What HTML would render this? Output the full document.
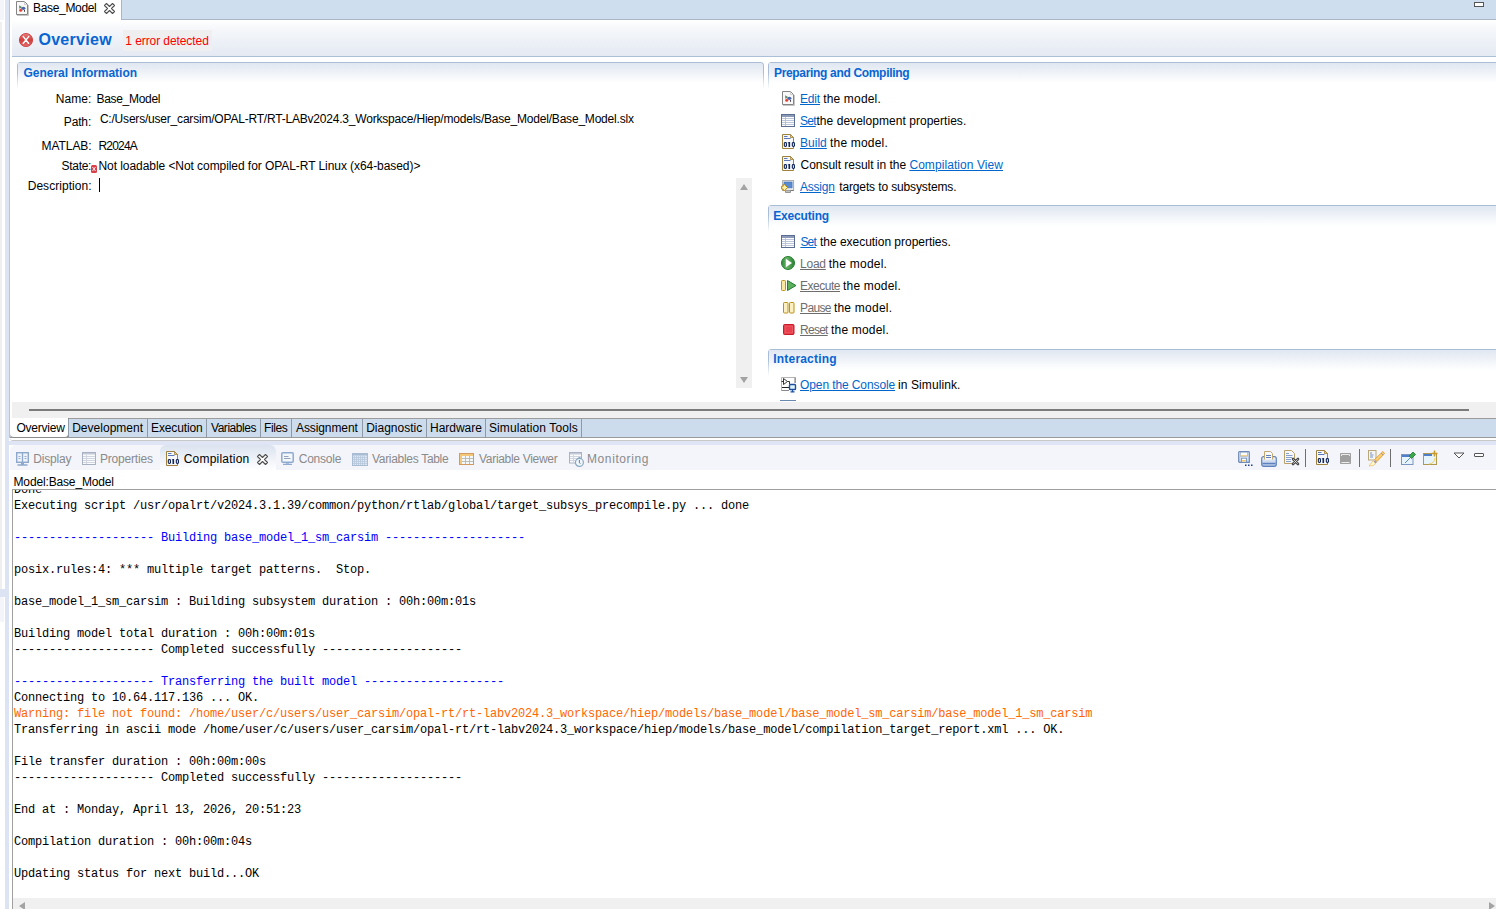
<!DOCTYPE html>
<html><head><meta charset="utf-8"><style>
html,body{margin:0;padding:0;}
body{width:1496px;height:909px;overflow:hidden;position:relative;background:#fff;font-family:"Liberation Sans", sans-serif;}
.a{position:absolute;}
.t{position:absolute;white-space:pre;font-family:"Liberation Sans", sans-serif;}
.m{position:absolute;left:14px;white-space:pre;font-family:"Liberation Mono", monospace;font-size:12px;letter-spacing:-0.2px;line-height:16px;height:16px;}
svg{position:absolute;overflow:visible;}
</style></head><body>
<!-- far left trim -->
<div class="a" style="left:0;top:0;width:4px;height:20px;background:#f3f5fa"></div>
<div class="a" style="left:0;top:22px;width:2px;height:567px;background:#efefef"></div>
<div class="a" style="left:0;top:589px;width:5px;height:8px;background:#dce3f3"></div>
<div class="a" style="left:0;top:597px;width:4px;height:25px;background:#f3f5fb;border-radius:0 3px 0 0"></div>
<div class="a" style="left:5px;top:0;width:4px;height:909px;background:#dce3f3"></div>
<!-- editor frame left border -->
<div class="a" style="left:9px;top:0;width:1px;height:438px;background:#c4c4c4"></div>
<!-- top tab bar -->
<div class="a" style="left:10px;top:0;width:1486px;height:19px;background:#cfdeee;border-bottom:1px solid #aab6c8"></div>
<div class="a" style="left:10px;top:0;width:111px;height:20px;background:#fff;border-right:1px solid #aab6c8"></div>
<div class="a" style="left:1474px;top:2px;width:8px;height:3px;border:1px solid #555;background:#fff"></div>
<!-- form header -->
<div class="a" style="left:12px;top:20px;width:1484px;height:36px;background:linear-gradient(#ffffff 0%,#f5f7fa 25%,#e4eaf3 100%)"></div>
<div class="a" style="left:12px;top:56px;width:1484px;height:1px;background:#abc0d7"></div>
<div class="a" style="left:123px;top:30px;width:89px;height:21px;background:#efefef"></div>
<!-- sections -->
<div class="a" style="left:17px;top:62px;width:745px;height:26px;border:1px solid #a9bed6;border-bottom:none;border-radius:3px 3px 0 0;background:linear-gradient(#dfe6f0,#ffffff 80%);-webkit-mask-image:linear-gradient(#000 40%,transparent)"></div>
<div class="a" style="left:18px;top:63px;width:744px;height:20px;background:linear-gradient(#e0e7f1,#ffffff)"></div>
<div class="a" style="left:768px;top:62px;width:740px;height:26px;border:1px solid #a9bed6;border-bottom:none;border-radius:3px 3px 0 0;-webkit-mask-image:linear-gradient(#000 40%,transparent)"></div>
<div class="a" style="left:769px;top:63px;width:727px;height:20px;background:linear-gradient(#e0e7f1,#ffffff)"></div>
<div class="a" style="left:768px;top:205px;width:740px;height:26px;border:1px solid #a9bed6;border-bottom:none;border-radius:3px 3px 0 0;-webkit-mask-image:linear-gradient(#000 40%,transparent)"></div>
<div class="a" style="left:769px;top:206px;width:727px;height:20px;background:linear-gradient(#e0e7f1,#ffffff)"></div>
<div class="a" style="left:768px;top:349px;width:740px;height:26px;border:1px solid #a9bed6;border-bottom:none;border-radius:3px 3px 0 0;-webkit-mask-image:linear-gradient(#000 40%,transparent)"></div>
<div class="a" style="left:769px;top:350px;width:727px;height:20px;background:linear-gradient(#e0e7f1,#ffffff)"></div>
<!-- description caret -->
<div class="a" style="left:99px;top:178px;width:1px;height:14px;background:#000"></div>
<!-- description scrollbar -->
<div class="a" style="left:736px;top:178px;width:16px;height:210px;background:#f0f0f0"></div>
<svg style="left:740px;top:184px" width="8" height="6"><path d="M0 6 L4 0 L8 6 Z" fill="#a3a3a3"/></svg>
<svg style="left:740px;top:377px" width="8" height="6"><path d="M0 0 L8 0 L4 6 Z" fill="#a3a3a3"/></svg>
<!-- gray strip -->
<div class="a" style="left:12px;top:402px;width:1484px;height:16px;background:#f0f0f0;border-bottom:1px solid #9c9c9c"></div>
<div class="a" style="left:29px;top:409px;width:1440px;height:2px;background:#7b7b7b"></div>
<!-- editor bottom tabs -->
<div class="a" style="left:10px;top:419px;width:1486px;height:18px;background:#cddcec;border-bottom:1px solid #9a9a9a"></div>
<div class="a" style="left:10px;top:418px;width:58px;height:19px;background:#fff;border-bottom:1px solid #8a8a8a;border-right:1px solid #8a8a8a;border-radius:0 0 4px 4px"></div>
<div class="a" style="left:10px;top:438px;width:1486px;height:2px;background:#fff;border-bottom:1px solid #c8c8c8;border-radius:0 0 0 5px"></div>
<!-- gap -->
<div class="a" style="left:9px;top:441px;width:1487px;height:4px;background:#dfe5f4"></div>
<!-- view panel -->
<div class="a" style="left:10px;top:445px;width:1486px;height:25px;background:#f3f5fb;border-radius:6px 0 0 0"></div>
<div class="a" style="left:160px;top:445px;width:116px;height:25px;background:linear-gradient(#dbe3ef,#ffffff);border-radius:6px 6px 0 0"></div>
<div class="a" style="left:10px;top:470px;width:1486px;height:439px;background:#fff"></div>
<!-- console box -->
<div class="a" style="left:12px;top:489px;width:1490px;height:430px;border-left:1px solid #a0a0a0;border-top:1px solid #a0a0a0;background:#fff"></div>
<!-- h scrollbar -->
<div class="a" style="left:13px;top:898px;width:1483px;height:11px;background:#f0f0f0"></div>
<svg style="left:19px;top:902px" width="6" height="8"><path d="M6 0 L0 4 L6 8 Z" fill="#a3a3a3"/></svg>
<svg style="left:1489px;top:902px" width="6" height="8"><path d="M0 0 L6 4 L0 8 Z" fill="#a3a3a3"/></svg>

<div class="a" style="left:13px;top:490px;width:1483px;height:408px;overflow:hidden;">
<div class="a" style="left:-13px;top:-490px;width:1496px;height:909px;">
<div class="m" style="top:482px;color:#000">Done</div>
<div class="m" style="top:498px;color:#000">Executing script /usr/opalrt/v2024.3.1.39/common/python/rtlab/global/target_subsys_precompile.py ... done</div>
<div class="m" style="top:530px;color:#0000ff">-------------------- Building base_model_1_sm_carsim --------------------</div>
<div class="m" style="top:562px;color:#000">posix.rules:4: *** multiple target patterns.  Stop.</div>
<div class="m" style="top:594px;color:#000">base_model_1_sm_carsim : Building subsystem duration : 00h:00m:01s</div>
<div class="m" style="top:626px;color:#000">Building model total duration : 00h:00m:01s</div>
<div class="m" style="top:642px;color:#000">-------------------- Completed successfully --------------------</div>
<div class="m" style="top:674px;color:#0000ff">-------------------- Transferring the built model --------------------</div>
<div class="m" style="top:690px;color:#000">Connecting to 10.64.117.136 ... OK.</div>
<div class="m" style="top:706px;color:#ff6600">Warning: file not found: /home/user/c/users/user_carsim/opal-rt/rt-labv2024.3_workspace/hiep/models/base_model/base_model_sm_carsim/base_model_1_sm_carsim</div>
<div class="m" style="top:722px;color:#000">Transferring in ascii mode /home/user/c/users/user_carsim/opal-rt/rt-labv2024.3_workspace/hiep/models/base_model/compilation_target_report.xml ... OK.</div>
<div class="m" style="top:754px;color:#000">File transfer duration : 00h:00m:00s</div>
<div class="m" style="top:770px;color:#000">-------------------- Completed successfully --------------------</div>
<div class="m" style="top:802px;color:#000">End at : Monday, April 13, 2026, 20:51:23</div>
<div class="m" style="top:834px;color:#000">Compilation duration : 00h:00m:04s</div>
<div class="m" style="top:866px;color:#000">Updating status for next build...OK</div>
</div></div>
<div class="t" style="left:33.10px;top:0.64px;font-size:12px;line-height:14px;color:#000;letter-spacing:-0.344px;">Base_Model</div>
<div class="t" style="left:38.40px;top:30.96px;font-size:16px;line-height:18px;color:#0865d3;font-weight:bold;letter-spacing:0.314px;">Overview</div>
<div class="t" style="left:125.30px;top:33.54px;font-size:12px;line-height:14px;color:#ff0000;letter-spacing:-0.080px;">1 error detected</div>
<div class="t" style="left:23.50px;top:65.84px;font-size:12px;line-height:14px;color:#0865d3;font-weight:bold;letter-spacing:-0.028px;">General Information</div>
<div class="t" style="left:774.00px;top:65.64px;font-size:12px;line-height:14px;color:#0865d3;font-weight:bold;letter-spacing:-0.327px;">Preparing and Compiling</div>
<div class="t" style="left:773.30px;top:209.04px;font-size:12px;line-height:14px;color:#0865d3;font-weight:bold;letter-spacing:-0.188px;">Executing</div>
<div class="t" style="left:773.30px;top:352.04px;font-size:12px;line-height:14px;color:#0865d3;font-weight:bold;letter-spacing:0.190px;">Interacting</div>
<div class="t" style="left:55.70px;top:91.64px;font-size:12px;line-height:14px;color:#000;letter-spacing:0.075px;">Name:</div>
<div class="t" style="left:96.50px;top:91.64px;font-size:12px;line-height:14px;color:#000;letter-spacing:-0.311px;">Base_Model</div>
<div class="t" style="left:63.80px;top:115.04px;font-size:12px;line-height:14px;color:#000;letter-spacing:-0.150px;">Path:</div>
<div class="t" style="left:99.90px;top:112.24px;font-size:12px;line-height:14px;color:#000;letter-spacing:-0.202px;">C:/Users/user_carsim/OPAL-RT/RT-LABv2024.3_Workspace/Hiep/models/Base_Model/Base_Model.slx</div>
<div class="t" style="left:41.50px;top:138.64px;font-size:12px;line-height:14px;color:#000;letter-spacing:-0.050px;">MATLAB:</div>
<div class="t" style="left:98.50px;top:138.64px;font-size:12px;line-height:14px;color:#000;letter-spacing:-0.820px;">R2024A</div>
<div class="t" style="left:61.60px;top:159.24px;font-size:12px;line-height:14px;color:#000;letter-spacing:-0.320px;">State:</div>
<div class="t" style="left:98.50px;top:158.64px;font-size:12px;line-height:14px;color:#000;letter-spacing:-0.064px;">Not loadable &lt;Not compiled for OPAL-RT Linux (x64-based)&gt;</div>
<div class="t" style="left:27.70px;top:179.04px;font-size:12px;line-height:14px;color:#000;letter-spacing:0.045px;">Description:</div>
<div class="t" style="left:800.00px;top:91.64px;font-size:12px;line-height:14px;color:#0066cc;letter-spacing:-0.169px;text-decoration:underline;">Edit</div>
<div class="t" style="left:823.20px;top:91.64px;font-size:12px;line-height:14px;color:#000;letter-spacing:0.167px;">the model.</div>
<div class="t" style="left:800.00px;top:113.64px;font-size:12px;line-height:14px;color:#0066cc;letter-spacing:-0.771px;text-decoration:underline;">Set</div>
<div class="t" style="left:816.50px;top:113.64px;font-size:12px;line-height:14px;color:#000;letter-spacing:0.038px;">the development properties.</div>
<div class="t" style="left:800.00px;top:135.64px;font-size:12px;line-height:14px;color:#0066cc;letter-spacing:0.023px;text-decoration:underline;">Build</div>
<div class="t" style="left:830.00px;top:135.64px;font-size:12px;line-height:14px;color:#000;letter-spacing:0.189px;">the model.</div>
<div class="t" style="left:800.50px;top:157.64px;font-size:12px;line-height:14px;color:#000;letter-spacing:-0.025px;">Consult result in the</div>
<div class="t" style="left:909.40px;top:157.64px;font-size:12px;line-height:14px;color:#0066cc;letter-spacing:0.069px;text-decoration:underline;">Compilation View</div>
<div class="t" style="left:800.00px;top:179.64px;font-size:12px;line-height:14px;color:#0066cc;letter-spacing:-0.236px;text-decoration:underline;">Assign</div>
<div class="t" style="left:839.20px;top:179.64px;font-size:12px;line-height:14px;color:#000;letter-spacing:-0.129px;">targets to subsystems.</div>
<div class="t" style="left:800.40px;top:234.64px;font-size:12px;line-height:14px;color:#0066cc;letter-spacing:-0.837px;text-decoration:underline;">Set</div>
<div class="t" style="left:820.00px;top:234.64px;font-size:12px;line-height:14px;color:#000;letter-spacing:-0.025px;">the execution properties.</div>
<div class="t" style="left:800.00px;top:256.64px;font-size:12px;line-height:14px;color:#6d6d6d;letter-spacing:-0.224px;text-decoration:underline;">Load</div>
<div class="t" style="left:828.80px;top:256.64px;font-size:12px;line-height:14px;color:#000;letter-spacing:0.233px;">the model.</div>
<div class="t" style="left:800.00px;top:278.64px;font-size:12px;line-height:14px;color:#6d6d6d;letter-spacing:-0.480px;text-decoration:underline;">Execute</div>
<div class="t" style="left:843.00px;top:278.64px;font-size:12px;line-height:14px;color:#000;letter-spacing:0.189px;">the model.</div>
<div class="t" style="left:800.00px;top:300.64px;font-size:12px;line-height:14px;color:#6d6d6d;letter-spacing:-0.625px;text-decoration:underline;">Pause</div>
<div class="t" style="left:833.90px;top:300.64px;font-size:12px;line-height:14px;color:#000;letter-spacing:0.233px;">the model.</div>
<div class="t" style="left:800.00px;top:322.64px;font-size:12px;line-height:14px;color:#6d6d6d;letter-spacing:-0.730px;text-decoration:underline;">Reset</div>
<div class="t" style="left:831.00px;top:322.64px;font-size:12px;line-height:14px;color:#000;letter-spacing:0.189px;">the model.</div>
<div class="t" style="left:800.00px;top:377.64px;font-size:12px;line-height:14px;color:#0066cc;letter-spacing:-0.102px;text-decoration:underline;">Open the Console</div>
<div class="t" style="left:898.00px;top:377.64px;font-size:12px;line-height:14px;color:#000;letter-spacing:0.091px;">in Simulink.</div>
<div class="t" style="left:16.40px;top:420.74px;font-size:12px;line-height:14px;color:#000;letter-spacing:-0.229px;">Overview</div>
<div class="t" style="left:72.20px;top:420.74px;font-size:12px;line-height:14px;color:#000;letter-spacing:0.020px;">Development</div>
<div class="t" style="left:151.00px;top:420.74px;font-size:12px;line-height:14px;color:#000;letter-spacing:-0.113px;">Execution</div>
<div class="t" style="left:211.00px;top:420.74px;font-size:12px;line-height:14px;color:#000;letter-spacing:-0.462px;">Variables</div>
<div class="t" style="left:264.00px;top:420.74px;font-size:12px;line-height:14px;color:#000;letter-spacing:-0.425px;">Files</div>
<div class="t" style="left:296.00px;top:420.74px;font-size:12px;line-height:14px;color:#000;letter-spacing:-0.100px;">Assignment</div>
<div class="t" style="left:366.20px;top:420.74px;font-size:12px;line-height:14px;color:#000;">Diagnostic</div>
<div class="t" style="left:430.00px;top:420.74px;font-size:12px;line-height:14px;color:#000;letter-spacing:-0.014px;">Hardware</div>
<div class="t" style="left:488.90px;top:420.74px;font-size:12px;line-height:14px;color:#000;letter-spacing:0.113px;">Simulation Tools</div>
<div class="t" style="left:33.20px;top:452.04px;font-size:12px;line-height:14px;color:#8a8a8a;letter-spacing:-0.183px;">Display</div>
<div class="t" style="left:100.00px;top:452.04px;font-size:12px;line-height:14px;color:#8a8a8a;letter-spacing:-0.200px;">Properties</div>
<div class="t" style="left:183.70px;top:452.04px;font-size:12px;line-height:14px;color:#000;letter-spacing:0.220px;">Compilation</div>
<div class="t" style="left:298.70px;top:452.04px;font-size:12px;line-height:14px;color:#8a8a8a;letter-spacing:-0.217px;">Console</div>
<div class="t" style="left:372.00px;top:452.04px;font-size:12px;line-height:14px;color:#8a8a8a;letter-spacing:-0.307px;">Variables Table</div>
<div class="t" style="left:479.00px;top:452.04px;font-size:12px;line-height:14px;color:#8a8a8a;letter-spacing:-0.300px;">Variable Viewer</div>
<div class="t" style="left:587.00px;top:452.04px;font-size:12px;line-height:14px;color:#8a8a8a;letter-spacing:0.600px;">Monitoring</div>
<div class="t" style="left:13.50px;top:474.84px;font-size:12px;line-height:14px;color:#000;letter-spacing:-0.147px;">Model:Base_Model</div>
<svg style="left:16px;top:1px" width="13" height="15" viewBox="0 0 13 15">
 <path d="M0.5 0.5 H8.5 L11.5 3.5 V13.5 H0.5 Z" fill="#f8f8f8" stroke="#858585"/>
 <path d="M8.5 0.5 V3.5 H11.5" fill="none" stroke="#c0c0c0" stroke-width="0.8"/>
 <path d="M1 14.5 H12.5 V4" fill="none" stroke="#b8b8b8" stroke-width="0.8"/>
 <path d="M3.2 4.2 L6.3 6.3 L3.2 7.8 Z" fill="#5f8a64"/>
 <ellipse cx="7.4" cy="7.3" rx="2" ry="1.6" fill="#4866ad"/>
 <circle cx="4.7" cy="9.3" r="1.5" fill="#e8402e"/>
 <rect x="8" y="9" width="0.9" height="1.8" fill="#333"/></svg>
<svg style="left:104px;top:3px" width="11" height="11" viewBox="0 0 11 11"><path d="M0.5 2.5 L2.5 0.5 L5.5 3.5 L8.5 0.5 L10.5 2.5 L7.5 5.5 L10.5 8.5 L8.5 10.5 L5.5 7.5 L2.5 10.5 L0.5 8.5 L3.5 5.5 Z" fill="#fff" stroke="#505050" stroke-width="1.1" stroke-linejoin="round"/></svg>
<svg style="left:19px;top:33px" width="14" height="14" viewBox="0 0 14 14">
 <defs><linearGradient id="eg" x1="0" y1="0" x2="0" y2="1"><stop offset="0" stop-color="#e68080"/><stop offset="0.5" stop-color="#d23c3c"/><stop offset="1" stop-color="#e27070"/></linearGradient></defs>
 <circle cx="7" cy="7" r="6.6" fill="url(#eg)" stroke="#c93434" stroke-width="0.8"/>
 <path d="M4.3 3.6 L9.5 10.3 M9.7 3.6 L4.3 10.3" stroke="#fff" stroke-width="1.5" stroke-linecap="round"/></svg>
<svg style="left:91px;top:165px" width="6" height="8" viewBox="0 0 6 8">
 <rect x="0" y="0" width="6" height="8" rx="1.5" fill="#d8404a"/>
 <path d="M1.5 2 L4.5 6 M4.5 2 L1.5 6" stroke="#fff" stroke-width="0.9"/></svg>
<svg style="left:782px;top:91px" width="13" height="15" viewBox="0 0 13 15">
 <path d="M0.5 0.5 H8.5 L11.5 3.5 V13.5 H0.5 Z" fill="#f8f8f8" stroke="#858585"/>
 <path d="M8.5 0.5 V3.5 H11.5" fill="none" stroke="#c0c0c0" stroke-width="0.8"/>
 <path d="M1 14.5 H12.5 V4" fill="none" stroke="#b8b8b8" stroke-width="0.8"/>
 <path d="M3.2 4.2 L6.3 6.3 L3.2 7.8 Z" fill="#5f8a64"/>
 <ellipse cx="7.4" cy="7.3" rx="2" ry="1.6" fill="#4866ad"/>
 <circle cx="4.7" cy="9.3" r="1.5" fill="#e8402e"/>
 <rect x="8" y="9" width="0.9" height="1.8" fill="#333"/></svg>
<svg style="left:781px;top:114px" width="14" height="13" viewBox="0 0 14 13">
 <rect x="0.5" y="0.5" width="13" height="12" fill="#fff" stroke="#5b6e92"/>
 <rect x="1" y="1" width="12" height="2" fill="#8b9ab8"/>
 <path d="M1 4.5 H13 M1 6.5 H13 M1 8.5 H13 M1 10.5 H13 M4.5 3 V12" stroke="#b4c0d4" stroke-width="0.9"/></svg>
<svg style="left:782px;top:134px" width="14" height="15" viewBox="0 0 14 15">
 <path d="M0.5 0.5 H8.5 L11.5 3.5 V14.5 H0.5 Z" fill="#f6f7fb" stroke="#a0823c"/>
 <path d="M8.5 0.5 V3.5 H11.5 Z" fill="#e0c890" stroke="#a0823c" stroke-width="0.8"/>
 <path d="M2 2.5 H5.5 M2 4.5 H8.5" stroke="#5a78b8" stroke-width="1"/>
 <rect x="1.8" y="8" width="3.2" height="5" rx="1.4" fill="#13285a"/><rect x="2.9000000000000004" y="9.2" width="1.0" height="2.6" fill="#e8eef8"/>
 <rect x="6.5" y="8" width="1.6" height="5" fill="#13285a"/><path d="M5.6 8.8 L6.6 8 V9.4 Z" fill="#13285a"/>
 <rect x="9.8" y="8" width="3.2" height="5" rx="1.4" fill="#13285a"/><rect x="10.9" y="9.2" width="1.0" height="2.6" fill="#e8eef8"/></svg>
<svg style="left:782px;top:156px" width="14" height="15" viewBox="0 0 14 15">
 <path d="M0.5 0.5 H8.5 L11.5 3.5 V14.5 H0.5 Z" fill="#f6f7fb" stroke="#a0823c"/>
 <path d="M8.5 0.5 V3.5 H11.5 Z" fill="#e0c890" stroke="#a0823c" stroke-width="0.8"/>
 <path d="M2 2.5 H5.5 M2 4.5 H8.5" stroke="#5a78b8" stroke-width="1"/>
 <rect x="1.8" y="8" width="3.2" height="5" rx="1.4" fill="#13285a"/><rect x="2.9000000000000004" y="9.2" width="1.0" height="2.6" fill="#e8eef8"/>
 <rect x="6.5" y="8" width="1.6" height="5" fill="#13285a"/><path d="M5.6 8.8 L6.6 8 V9.4 Z" fill="#13285a"/>
 <rect x="9.8" y="8" width="3.2" height="5" rx="1.4" fill="#13285a"/><rect x="10.9" y="9.2" width="1.0" height="2.6" fill="#e8eef8"/></svg>
<svg style="left:781px;top:179px" width="15" height="15" viewBox="0 0 15 15">
 <rect x="1.6" y="1.6" width="11" height="9.8" fill="#f2f2f2" stroke="#a8a8a8"/>
 <rect x="3" y="3" width="8.1" height="5.9" fill="#5a8ad0" stroke="#3f6fb8" stroke-width="0.6"/>
 <path d="M4.5 13.5 V12 H9.5 V13.5 Z" fill="#eee" stroke="#8a8a8a" stroke-width="0.9"/>
 <path d="M9.5 11.5 H12.5" stroke="#777" stroke-width="1"/>
 <path d="M0.6 7.2 H2.2 V5.6 H3.6 L6.6 8.5 L3.6 11.6 H2.2 V10 H0.6 Z" fill="#fff1a8" stroke="#c08a10" stroke-width="1" stroke-linejoin="round"/></svg>
<svg style="left:781px;top:235px" width="14" height="13" viewBox="0 0 14 13">
 <rect x="0.5" y="0.5" width="13" height="12" fill="#fff" stroke="#5b6e92"/>
 <rect x="1" y="1" width="12" height="2" fill="#8b9ab8"/>
 <path d="M1 4.5 H13 M1 6.5 H13 M1 8.5 H13 M1 10.5 H13 M4.5 3 V12" stroke="#b4c0d4" stroke-width="0.9"/></svg>
<svg style="left:781px;top:256px" width="14" height="14" viewBox="0 0 14 14">
 <defs><linearGradient id="lg" x1="0" y1="0" x2="1" y2="0"><stop offset="0" stop-color="#2f8a3a"/><stop offset="0.4" stop-color="#6ab468"/><stop offset="1" stop-color="#2a7f34"/></linearGradient></defs>
 <circle cx="7" cy="7" r="6.5" fill="url(#lg)" stroke="#24802f" stroke-width="1"/>
 <path d="M4.8 2.8 L11 7 L4.8 11.2 Z" fill="#fff"/></svg>
<svg style="left:781px;top:280px" width="16" height="11" viewBox="0 0 16 11">
 <rect x="0.5" y="0.5" width="4" height="10" rx="0.8" fill="#fbe8a0" stroke="#b8921e"/>
 <path d="M6.5 0.5 L15 5.5 L6.5 10.5 Z" fill="#5cb05a" stroke="#257a3a" stroke-width="1" stroke-linejoin="round"/></svg>
<svg style="left:783px;top:302px" width="12" height="12" viewBox="0 0 12 12">
 <rect x="0.5" y="0.5" width="4.5" height="10.5" rx="0.8" fill="#fdf0c0" stroke="#b8921e"/>
 <rect x="6.5" y="0.5" width="4.5" height="10.5" rx="0.8" fill="#fdf0c0" stroke="#b8921e"/></svg>
<svg style="left:783px;top:324px" width="12" height="11" viewBox="0 0 12 11">
 <rect x="0.5" y="0.5" width="10.5" height="10" rx="1" fill="#e63442" stroke="#c81a28"/>
 <rect x="2" y="2" width="7.5" height="7" fill="#e8404c" stroke="#f07880" stroke-width="0.5"/></svg>
<svg style="left:781px;top:377px" width="16" height="16" viewBox="0 0 16 16">
 <path d="M0.5 13.5 V0.5 H14.5 V6" fill="none" stroke="#b4b4b4" stroke-width="1"/>
 <path d="M14 0.5 V6" stroke="#8a8a8a" stroke-width="1.2"/>
 <path d="M0.5 13.5 H8" stroke="#8a8a8a" stroke-width="1"/>
 <path d="M2.5 1.5 L6.5 4.5 L2.5 7.5 Z" fill="#fff" stroke="#222" stroke-width="0.9" stroke-linejoin="round"/>
 <path d="M0.5 4.5 H2.5 M6.5 4.5 H8.5 V7" fill="none" stroke="#222" stroke-width="0.9"/>
 <path d="M1 10.5 H8" stroke="#222" stroke-width="1"/>
 <rect x="8.5" y="7.5" width="6" height="5" rx="0.8" fill="#dff4fb" stroke="#1d4f9c" stroke-width="1.4"/>
 <path d="M11.5 12.5 V14.5 M9.5 14.8 H13.5" stroke="#1d4f9c" stroke-width="1.2"/></svg>
<div class="a" style="left:780px;top:400px;width:16px;height:1px;background:#6a88b0;"></div>
<svg style="left:16px;top:452px" width="13" height="14" viewBox="0 0 13 14">
 <rect x="0.7" y="0.7" width="11.6" height="9.6" fill="#eef3fa" stroke="#8ea8cc" stroke-width="1.4"/>
 <path d="M6.5 1 V10" stroke="#8ea8cc" stroke-width="1.3"/>
 <path d="M2.5 4.5 H4.5 M8.5 4.5 H10.5 M2.5 6.5 H4.5 M8.5 6.5 H10.5" stroke="#8ea8cc" stroke-width="0.9"/>
 <path d="M5 11.5 H8 M1.5 13 H11.5" stroke="#8ea8cc" stroke-width="1.3"/></svg>
<svg style="left:82px;top:452px" width="14" height="13" viewBox="0 0 14 13">
 <rect x="0.5" y="0.5" width="13" height="12" fill="#fafbfd" stroke="#a9b1c2"/>
 <rect x="1" y="1" width="12" height="1.5" fill="#c3c9d6"/>
 <path d="M1 4.5 H13 M1 6.5 H13 M1 8.5 H13 M1 10.5 H13 M4.5 3 V12" stroke="#d0d5df" stroke-width="1"/></svg>
<svg style="left:166px;top:451px" width="14" height="15" viewBox="0 0 14 15">
 <path d="M0.5 0.5 H8.5 L11.5 3.5 V14.5 H0.5 Z" fill="#f6f7fb" stroke="#a0823c"/>
 <path d="M8.5 0.5 V3.5 H11.5 Z" fill="#e0c890" stroke="#a0823c" stroke-width="0.8"/>
 <path d="M2 2.5 H5.5 M2 4.5 H8.5" stroke="#5a78b8" stroke-width="1"/>
 <rect x="1.8" y="8" width="3.2" height="5" rx="1.4" fill="#13285a"/><rect x="2.9000000000000004" y="9.2" width="1.0" height="2.6" fill="#e8eef8"/>
 <rect x="6.5" y="8" width="1.6" height="5" fill="#13285a"/><path d="M5.6 8.8 L6.6 8 V9.4 Z" fill="#13285a"/>
 <rect x="9.8" y="8" width="3.2" height="5" rx="1.4" fill="#13285a"/><rect x="10.9" y="9.2" width="1.0" height="2.6" fill="#e8eef8"/></svg>
<svg style="left:257px;top:454px" width="11" height="11" viewBox="0 0 11 11"><path d="M0.5 2.5 L2.5 0.5 L5.5 3.5 L8.5 0.5 L10.5 2.5 L7.5 5.5 L10.5 8.5 L8.5 10.5 L5.5 7.5 L2.5 10.5 L0.5 8.5 L3.5 5.5 Z" fill="#fff" stroke="#505050" stroke-width="1.1" stroke-linejoin="round"/></svg>
<svg style="left:281px;top:452px" width="13" height="13" viewBox="0 0 13 13">
 <rect x="0.8" y="0.8" width="11.4" height="9.4" rx="1" fill="#f2f8fc" stroke="#8fa9cf" stroke-width="1.5"/>
 <path d="M3 4.5 H7.5 M3 6.5 H9.5" stroke="#8a97b8" stroke-width="0.9"/>
 <path d="M5 11 H8 M2 12.3 H11" stroke="#8fa9cf" stroke-width="1.2"/></svg>
<svg style="left:352px;top:453px" width="16" height="13" viewBox="0 0 16 13">
 <rect x="0.5" y="0.5" width="15" height="12" fill="#dde6f2" stroke="#a8bcd4"/>
 <rect x="1" y="1" width="14" height="1.5" fill="#a8bcd4"/>
 <path d="M1 4.5 H15 M1 6.5 H15 M1 8.5 H15 M1 10.5 H15 M2.5 3 V12 M4.5 3 V12 M6.5 3 V12 M8.5 3 V12 M10.5 3 V12 M12.5 3 V12" stroke="#b8c8dc" stroke-width="0.8"/></svg>
<svg style="left:459px;top:453px" width="15" height="12" viewBox="0 0 15 12">
 <rect x="0.5" y="0.5" width="14" height="11" fill="#f4f8fb" stroke="#d09a60"/>
 <rect x="1" y="1" width="13" height="2" fill="#f2c878"/>
 <rect x="1" y="3" width="2" height="8" fill="#f2c878"/>
 <path d="M3 5.5 H14 M3 8.5 H14 M6.5 3 V11 M10.5 3 V11" stroke="#b8b8a8" stroke-width="0.9"/></svg>
<svg style="left:569px;top:452px" width="16" height="15" viewBox="0 0 16 15">
 <rect x="0.5" y="0.5" width="12" height="10.5" fill="#fafbfd" stroke="#a9b1c2"/>
 <rect x="1" y="1" width="11" height="1.5" fill="#c3c9d6"/>
 <path d="M1 4.5 H12 M1 6.5 H12 M1 8.5 H12 M4.5 3 V11" stroke="#d0d5df" stroke-width="1"/>
 <circle cx="10.4" cy="10.4" r="4" fill="#eef7fb" stroke="#8aa8c0" stroke-width="1.2"/>
 <path d="M9.5 5.5 H11.5 M10.4 5.5 V6.5" stroke="#8aa8c0" stroke-width="1"/>
 <path d="M10.4 8 V10.8 L11.5 11.6" fill="none" stroke="#5a6a9a" stroke-width="0.9"/></svg>
<svg style="left:1238px;top:451px" width="16" height="16" viewBox="0 0 16 16">
 <defs><linearGradient id="sg" x1="0" y1="0" x2="0" y2="1"><stop offset="0" stop-color="#f0f4fa"/><stop offset="1" stop-color="#c8d6ea"/></linearGradient></defs>
 <path d="M0.7 1.5 Q0.7 0.7 1.5 0.7 H10.5 Q11.3 0.7 11.3 1.5 V11.3 H1.5 Q0.7 11.3 0.7 10.5 Z" fill="url(#sg)" stroke="#6a88b8" stroke-width="1.2"/>
 <rect x="2.5" y="1.2" width="7" height="4" fill="#fbfbfb" stroke="#8aa0c0" stroke-width="0.6"/>
 <rect x="2.6" y="4.2" width="6.8" height="1" fill="#f2c870"/>
 <rect x="3.5" y="7.2" width="5" height="4" fill="#fbfbfb" stroke="#6a88b8" stroke-width="0.8"/>
 <rect x="4" y="9" width="4" height="1.5" fill="#f2c870"/>
 <path d="M7 14.2 H8.5 M10 14.2 H11.5 M13 14.2 H14.5" stroke="#1f3f8a" stroke-width="1.6"/></svg>
<svg style="left:1261px;top:451px" width="16" height="16" viewBox="0 0 16 16">
 <defs><linearGradient id="pg" x1="0" y1="0" x2="0" y2="1"><stop offset="0" stop-color="#f4f7fc"/><stop offset="1" stop-color="#a8bfe0"/></linearGradient></defs>
 <rect x="0.7" y="5.7" width="14.6" height="9.6" rx="2" fill="url(#pg)" stroke="#5f82bf" stroke-width="1.2"/>
 <path d="M3.5 8.5 V0.5 H9.5 L11.5 2.5 V8.5" fill="#f8f8fb" stroke="#c0a870"/>
 <path d="M5 4.5 H10 M5 6.5 H10" stroke="#5070b0" stroke-width="0.9"/>
 <path d="M1.5 12.5 H14.5" stroke="#5f82bf" stroke-width="1.4"/></svg>
<svg style="left:1284px;top:450px" width="16" height="16" viewBox="0 0 16 16">
 <path d="M0.5 0.5 H7.5 L10.5 3.5 V13.5 H0.5 Z" fill="#f7f8fb" stroke="#b8a068"/>
 <path d="M2 3.5 H5 M2 5.5 H8.5 M2 7.5 H8 M2 9.5 H7 M2 11.5 H7" stroke="#6a88c0" stroke-width="0.8"/>
 <path d="M9 9 L14 14 M14 9 L9 14" stroke="#4a4a4a" stroke-width="2.6" stroke-linecap="round"/>
 <path d="M9.3 9.3 L13.7 13.7 M13.7 9.3 L9.3 13.7" stroke="#fff" stroke-width="0.7"/></svg>
<div class="a" style="left:1305px;top:449px;width:1px;height:18px;background:#6e6e6e;"></div>
<svg style="left:1316px;top:450px" width="14" height="15" viewBox="0 0 14 15">
 <path d="M0.5 0.5 H8.5 L11.5 3.5 V14.5 H0.5 Z" fill="#f6f7fb" stroke="#a0823c"/>
 <path d="M8.5 0.5 V3.5 H11.5 Z" fill="#e0c890" stroke="#a0823c" stroke-width="0.8"/>
 <path d="M2 2.5 H5.5 M2 4.5 H8.5" stroke="#5a78b8" stroke-width="1"/>
 <rect x="1.8" y="8" width="3.2" height="5" rx="1.4" fill="#13285a"/><rect x="2.9000000000000004" y="9.2" width="1.0" height="2.6" fill="#e8eef8"/>
 <rect x="6.5" y="8" width="1.6" height="5" fill="#13285a"/><path d="M5.6 8.8 L6.6 8 V9.4 Z" fill="#13285a"/>
 <rect x="9.8" y="8" width="3.2" height="5" rx="1.4" fill="#13285a"/><rect x="10.9" y="9.2" width="1.0" height="2.6" fill="#e8eef8"/></svg>
<svg style="left:1340px;top:453px" width="11" height="11" viewBox="0 0 11 11">
 <rect x="0" y="0" width="11" height="11" rx="0.8" fill="#a0a0a0"/>
 <path d="M1.5 3 V1.5 H9.5 V3" fill="none" stroke="#f4f4f4" stroke-width="0.9"/>
 <path d="M1.5 9.5 H9.5" stroke="#f4f4f4" stroke-width="0.9"/></svg>
<div class="a" style="left:1359px;top:449px;width:1px;height:18px;background:#6e6e6e;"></div>
<svg style="left:1368px;top:450px" width="17" height="17" viewBox="0 0 17 17">
 <rect x="0.5" y="0.5" width="7.5" height="9.5" fill="#f4f4f4" stroke="#b8a878"/>
 <path d="M2 3 H4 M2 5 H5.5 M2 7 H5" stroke="#5a78b8" stroke-width="0.8"/>
 <path d="M15 1.5 L16.5 3.5 L9 11.5 L6.5 9.5 Z" fill="#f8d070" stroke="#e09030" stroke-width="0.8"/>
 <path d="M13.5 3.5 L14.5 4.5" stroke="#3a5aa0" stroke-width="0.8"/>
 <path d="M6.5 9.5 L9 11.5 L5.5 15.5 L1 16 L4 12 Z" fill="#fff8c8" stroke="#e8b050" stroke-width="0.6"/>
 <path d="M7 10 L9 12 L7.5 13.5 L5.5 11.5 Z" fill="#a898a8"/></svg>
<div class="a" style="left:1390px;top:449px;width:1px;height:18px;background:#6e6e6e;"></div>
<svg style="left:1401px;top:451px" width="15" height="15" viewBox="0 0 15 15">
 <rect x="0.5" y="3.5" width="11.5" height="10" fill="#e8f4fb" stroke="#7d95bf"/>
 <rect x="1" y="4" width="11" height="2" fill="#4f7fc8"/>
 <path d="M4 12 L9 7" stroke="#3a70b0" stroke-width="0.8"/>
 <path d="M8 5 L12 1 L14.5 3.5 L10.5 7.5 Z" fill="#3aa84a" stroke="#217a2c" stroke-width="0.8"/></svg>
<svg style="left:1423px;top:450px" width="16" height="16" viewBox="0 0 16 16">
 <rect x="0.5" y="3.5" width="13" height="11" fill="#e8f4fb" stroke="#b09850"/>
 <rect x="1" y="4" width="8" height="2" fill="#4f7fc8"/>
 <path d="M11.5 0.5 V6.5 M8.5 3.5 H14.5" stroke="#c89a2a" stroke-width="1.5"/>
 <path d="M12 8 Q12 13 6 14" fill="none" stroke="#f0d060" stroke-width="1"/></svg>
<svg style="left:1453px;top:452px" width="12" height="7" viewBox="0 0 12 7"><path d="M1 1 H11 L6 6 Z" fill="#fff" stroke="#555" stroke-width="1" stroke-linejoin="round"/></svg>
<div class="a" style="left:1474px;top:453px;width:8px;height:2px;background:#fff;border:1px solid #555;border-radius:1px"></div>
<div class="a" style="left:68px;top:419px;width:1px;height:18px;background:#8f9aa8;"></div>
<div class="a" style="left:147px;top:419px;width:1px;height:18px;background:#8f9aa8;"></div>
<div class="a" style="left:206px;top:419px;width:1px;height:18px;background:#8f9aa8;"></div>
<div class="a" style="left:260px;top:419px;width:1px;height:18px;background:#8f9aa8;"></div>
<div class="a" style="left:291px;top:419px;width:1px;height:18px;background:#8f9aa8;"></div>
<div class="a" style="left:362px;top:419px;width:1px;height:18px;background:#8f9aa8;"></div>
<div class="a" style="left:426px;top:419px;width:1px;height:18px;background:#8f9aa8;"></div>
<div class="a" style="left:485px;top:419px;width:1px;height:18px;background:#8f9aa8;"></div>
<div class="a" style="left:581px;top:419px;width:1px;height:18px;background:#8f9aa8;"></div>
</body></html>
